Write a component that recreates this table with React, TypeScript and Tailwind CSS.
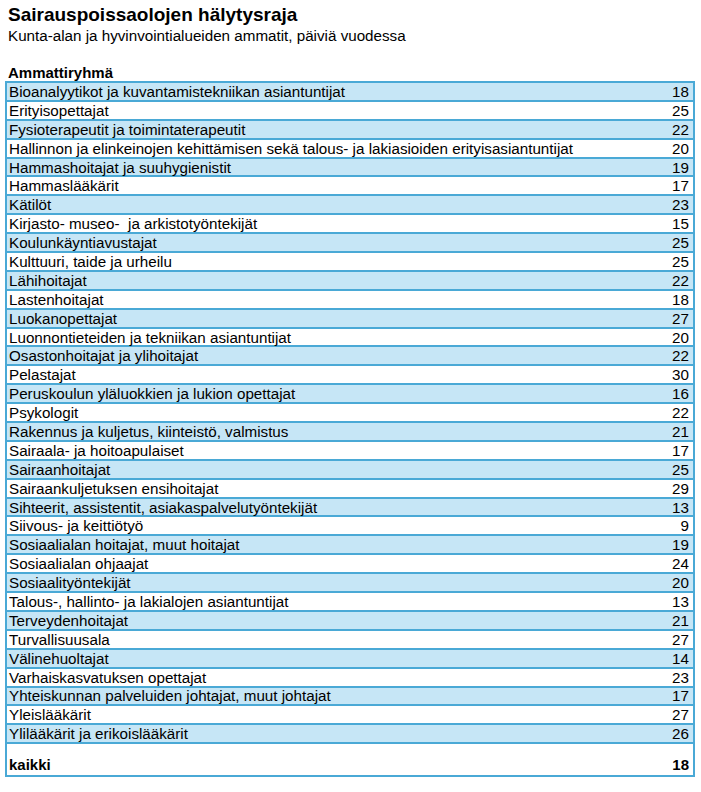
import React from "react";

const rows: [string, number][] = [
  ["Bioanalyytikot ja kuvantamistekniikan asiantuntijat", 18],
  ["Erityisopettajat", 25],
  ["Fysioterapeutit ja toimintaterapeutit", 22],
  ["Hallinnon ja elinkeinojen kehittämisen sekä talous- ja lakiasioiden erityisasiantuntijat", 20],
  ["Hammashoitajat ja suuhygienistit", 19],
  ["Hammaslääkärit", 17],
  ["Kätilöt", 23],
  ["Kirjasto- museo-  ja arkistotyöntekijät", 15],
  ["Koulunkäyntiavustajat", 25],
  ["Kulttuuri, taide ja urheilu", 25],
  ["Lähihoitajat", 22],
  ["Lastenhoitajat", 18],
  ["Luokanopettajat", 27],
  ["Luonnontieteiden ja tekniikan asiantuntijat", 20],
  ["Osastonhoitajat ja ylihoitajat", 22],
  ["Pelastajat", 30],
  ["Peruskoulun yläluokkien ja lukion opettajat", 16],
  ["Psykologit", 22],
  ["Rakennus ja kuljetus, kiinteistö, valmistus", 21],
  ["Sairaala- ja hoitoapulaiset", 17],
  ["Sairaanhoitajat", 25],
  ["Sairaankuljetuksen ensihoitajat", 29],
  ["Sihteerit, assistentit, asiakaspalvelutyöntekijät", 13],
  ["Siivous- ja keittiötyö", 9],
  ["Sosiaalialan hoitajat, muut hoitajat", 19],
  ["Sosiaalialan ohjaajat", 24],
  ["Sosiaalityöntekijät", 20],
  ["Talous-, hallinto- ja lakialojen asiantuntijat", 13],
  ["Terveydenhoitajat", 21],
  ["Turvallisuusala", 27],
  ["Välinehuoltajat", 14],
  ["Varhaiskasvatuksen opettajat", 23],
  ["Yhteiskunnan palveluiden johtajat, muut johtajat", 17],
  ["Yleislääkärit", 27],
  ["Ylilääkärit ja erikoislääkärit", 26],
];

export default function App() {
  return (
    <div
      className="w-[701px] h-[792px] bg-white text-black"
      style={{ fontFamily: '"Liberation Sans", Arial, sans-serif' }}
    >
      <div className="pl-[8px] pt-[4px]">
        <div className="text-[19px] font-bold leading-[22px]">Sairauspoissaolojen hälytysraja</div>
        <div className="text-[15.2px] leading-[18px] mt-[1px]">
          Kunta-alan ja hyvinvointialueiden ammatit, päiviä vuodessa
        </div>
        <div className="text-[15px] font-bold leading-[17px] mt-[19px]">Ammattiryhmä</div>
      </div>
      <div className="ml-[5px] w-[690px] border-x-[2px] border-[#4aa9d6]">
        {rows.map(([name, val], i) => (
          <div
            key={name}
            className={
              "flex items-center justify-between h-[18.9px] border-t-[2px] border-[#4aa9d6] pl-[2px] pr-[4px] pt-[1px] text-[15.2px] leading-[16px] " +
              (i % 2 === 0 ? "bg-[#c6e6f6]" : "bg-white")
            }
          >
            <span className="whitespace-pre">{name}</span>
            <span>{val}</span>
          </div>
        ))}
        <div className="flex items-end justify-between h-[35px] border-y-[2px] border-[#4aa9d6] pl-[2px] pr-[4px] pb-[2px] text-[15px] leading-[16px] font-bold bg-white">
          <span>kaikki</span>
          <span>18</span>
        </div>
      </div>
    </div>
  );
}
